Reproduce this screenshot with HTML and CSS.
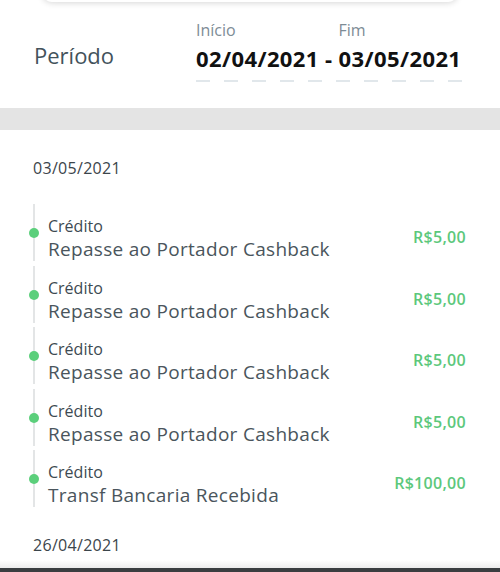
FILE: index.html
```
<!DOCTYPE html>
<html>
  <head>
    <meta name="viewport" content="width=device-width, initial-scale=1.0">
    <title>Extrato</title>
    <link rel="stylesheet" href="styles.css">
  </head>
  <body>
    <div id="screen">
      <div id="top-card"></div>
      <div id="period">
        <h2 id="period-title">Período</h2>
        <div id="period-range">
          <div class="range-cols">
            <div class="range-col">
              <span class="range-label">Início</span>
              <span class="range-date">02/04/2021 - </span>
            </div>
            <div class="range-col">
              <span class="range-label">Fim</span>
              <span class="range-date">03/05/2021</span>
            </div>
          </div>
          <div class="range-dashes"></div>
        </div>
      </div>
      <div id="divider"></div>
      <div id="statement">
        <p class="day">03/05/2021</p>
        <ul class="timeline">
          <li class="entry">
            <div class="entry-text">
              <span class="entry-type">Crédito</span>
              <span class="entry-desc">Repasse ao Portador Cashback</span>
            </div>
            <span class="entry-value">R$5,00</span>
          </li>
          <li class="entry">
            <div class="entry-text">
              <span class="entry-type">Crédito</span>
              <span class="entry-desc">Repasse ao Portador Cashback</span>
            </div>
            <span class="entry-value">R$5,00</span>
          </li>
          <li class="entry">
            <div class="entry-text">
              <span class="entry-type">Crédito</span>
              <span class="entry-desc">Repasse ao Portador Cashback</span>
            </div>
            <span class="entry-value">R$5,00</span>
          </li>
          <li class="entry">
            <div class="entry-text">
              <span class="entry-type">Crédito</span>
              <span class="entry-desc">Repasse ao Portador Cashback</span>
            </div>
            <span class="entry-value">R$5,00</span>
          </li>
          <li class="entry">
            <div class="entry-text">
              <span class="entry-type">Crédito</span>
              <span class="entry-desc">Transf Bancaria Recebida</span>
            </div>
            <span class="entry-value">R$100,00</span>
          </li>
        </ul>
        <p class="day">26/04/2021</p>
      </div>
      <div id="bottom-edge"></div>
    </div>
  </body>
</html>
```

FILE: styles.css
```
body {
  margin: 0;
  font-family: "Open Sans", sans-serif;
  background-color: #ffffff;
}

#screen {
  width: 500px;
  height: 572px;
  display: flex;
  flex-direction: column;
  overflow: hidden;
}

#top-card {
  flex: none;
  height: 10px;
  margin: -8px 42px 0;
  border-radius: 0 0 18px 18px;
  background-color: #ffffff;
  box-shadow: 0px 1px 6px rgba(0, 0, 0, 0.16);
}

#period {
  flex: none;
  height: 106px;
  display: flex;
  align-items: flex-start;
  padding-left: 34px;
  padding-top: 8px;
  box-sizing: border-box;
}

#period-title {
  margin: 0;
  margin-top: 31px;
  width: 162px;
  font-size: 22px;
  font-weight: 500;
  color: #43525b;
  line-height: 28px;
}

#period-range {
  width: 266px;
  margin-top: 9px;
}

.range-cols {
  display: flex;
}

.range-col {
  display: flex;
  flex-direction: column;
}

.range-label {
  font-size: 16px;
  color: #7d8c96;
  line-height: 22px;
  margin-bottom: 2px;
}

.range-date {
  font-size: 22px;
  font-weight: 700;
  color: #111111;
  white-space: pre;
  letter-spacing: 0.4px;
  line-height: 30px;
}

.range-dashes {
  margin-top: 7px;
  height: 2px;
  background: repeating-linear-gradient(to right, #e1e7eb 0 14px, transparent 14px 28px);
}

#divider {
  flex: none;
  height: 22px;
  background-color: #e4e4e4;
}

#statement {
  flex: 1;
  padding: 27px 34px 0 33px;
}

.day {
  margin: 0;
  font-size: 16px;
  color: #3b454b;
  letter-spacing: 0.3px;
  line-height: 22px;
}

.timeline {
  list-style: none;
  margin: 25px 0 27px;
  padding: 0;
}

.entry {
  position: relative;
  height: 57px;
  margin-bottom: 4.5px;
  border-left: 2px solid #e3e5e6;
  padding-left: 13px;
  display: flex;
  align-items: flex-start;
}

.entry::before {
  content: "";
  position: absolute;
  left: -6px;
  top: 24px;
  width: 10px;
  height: 10px;
  border-radius: 50%;
  background-color: #5bcf7b;
}

.entry-text {
  flex: 1;
  display: flex;
  flex-direction: column;
  padding-top: 12px;
}

.entry-type {
  font-size: 16px;
  font-weight: 500;
  color: #3d4a52;
  line-height: 21px;
}

.entry-desc {
  font-size: 19px;
  color: #4a555c;
  letter-spacing: 0.3px;
  line-height: 24px;
}

.entry-value {
  font-size: 16px;
  font-weight: 600;
  color: #5cc87c;
  letter-spacing: 0.3px;
  line-height: 22px;
  padding-top: 22px;
}

#bottom-edge {
  flex: none;
  height: 12px;
  background: linear-gradient(to bottom, #ffffff 0, #ececec 8px, #3a3d40 8px);
}
```
